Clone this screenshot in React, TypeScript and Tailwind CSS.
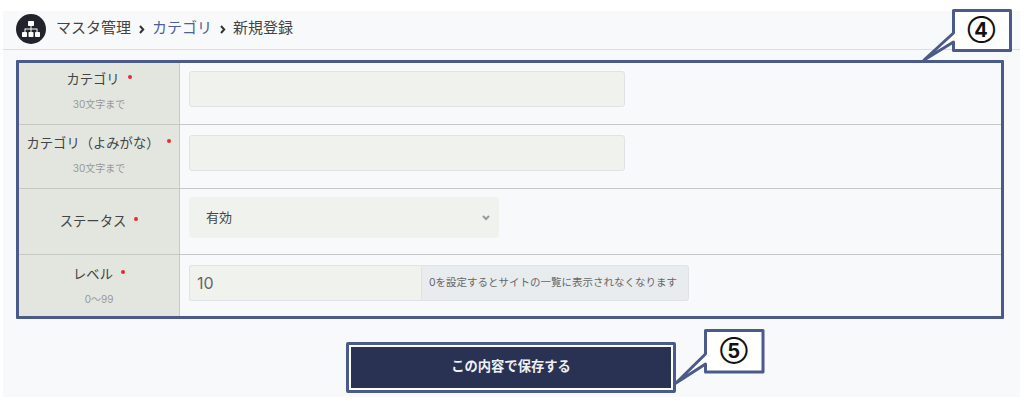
const FONT = "font-['Inter','Noto_Sans_CJK_JP',sans-serif]";

function Required() {
  return <span className="inline-block w-[4px] h-[4px] rounded-full bg-[#f0282d] ml-[8px] relative top-[-5px]" />;
}

function Chevron() {
  return (
    <svg className="mx-[7.5px] mt-[1px]" width="6" height="9" viewBox="0 0 6 9" fill="none" stroke="#333" strokeWidth="2">
      <path d="M1 1l3.2 3.5L1 8" />
    </svg>
  );
}

function Row({
  title,
  note,
  rowClass,
  labelClass,
  fieldClass,
  children,
}: {
  title: string;
  note?: string;
  rowClass: string;
  labelClass: string;
  fieldClass: string;
  children: React.ReactNode;
}) {
  return (
    <div className={`flex ${rowClass}`}>
      <div className={`w-[161px] shrink-0 bg-[#e2e6df] border-r border-[#c8cac6] flex flex-col items-center justify-center ${labelClass}`}>
        <div className="text-[13.3px] leading-[18px] text-[#444] whitespace-nowrap">
          {title}
          <Required />
        </div>
        {note && <div className="text-[10px] leading-[12px] text-[#999] mt-[10px]">{note}</div>}
      </div>
      <div className={`flex-1 pl-[9px] ${fieldClass}`}>{children}</div>
    </div>
  );
}

function TextBox() {
  return <div className="w-[436px] h-[36px] bg-[#f0f2ed] border border-[#dfe2e6] rounded-[3px]" />;
}

// callout boxes sit over the page, so these are absolute
function Callouts() {
  return (
    <>
      <svg className="absolute left-0 top-0 pointer-events-none" width="1024" height="407" viewBox="0 0 1024 407">
        <path d="M953.5 10.5H1010.5V50.5H953.5V42L924 60L953.5 33Z" fill="#fff" stroke="#4a5a8a" strokeWidth="3" strokeLinejoin="round" />
        <path d="M705.5 330.5H763V372H705.5V364L676 383L705.5 354Z" fill="#fff" stroke="#4a5a8a" strokeWidth="3" strokeLinejoin="round" />
      </svg>
      <div className="absolute left-[953px] top-[10px] w-[57px] h-[39px] flex items-center justify-center text-[20px] font-bold text-[#111]">④</div>
      <div className="absolute left-[705px] top-[330px] w-[58px] h-[41px] flex items-center justify-center text-[20px] font-bold text-[#111]">⑤</div>
    </>
  );
}

export default function App() {
  return (
    <div className={`relative w-[1024px] h-[407px] bg-white overflow-hidden pt-[11px] pl-[3px] ${FONT}`}>
      <div className="w-[1017px] h-[386px] bg-[#f8f9fb]">
        <div className="h-[39px] flex items-center pl-[13px] pb-[3px] border-b border-[#dcdedc] text-[15px] text-[#444]">
          <span className="w-[30px] h-[30px] rounded-full bg-[#23232b] flex items-center justify-center mr-[10px]">
            <svg width="20" height="18" viewBox="0 0 20 18" fill="#fff">
              <rect x="7" y="1" width="6" height="5" rx="0.8" />
              <rect x="1" y="12" width="5" height="5" rx="0.8" />
              <rect x="7.5" y="12" width="5" height="5" rx="0.8" />
              <rect x="14" y="12" width="5" height="5" rx="0.8" />
              <path d="M9.5 6h1v2.5h6V12h-1V9.5h-5V12h-1V9.5h-5V12h-1V8.5h6Z" />
            </svg>
          </span>
          <span>マスタ管理</span>
          <Chevron />
          <span className="text-[#4d5f94]">カテゴリ</span>
          <Chevron />
          <span>新規登録</span>
        </div>

        <div className="ml-[13px] mt-[10px] w-[988px] h-[259px] border-[3px] border-[#4a5a8a] rounded-[1px]">
          <Row title="カテゴリ" note="30文字まで" rowClass="h-[62px] border-b border-[#c6c8c6]" labelClass="pb-[7px]" fieldClass="pt-[8px]">
            <TextBox />
          </Row>
          <Row title="カテゴリ（よみがな）" note="30文字まで" rowClass="h-[64px] border-b border-[#c6c8c6]" labelClass="pb-[5px]" fieldClass="pt-[10px]">
            <TextBox />
          </Row>
          <Row title="ステータス" rowClass="h-[66px] border-b border-[#c6c8c6]" labelClass="pb-[2px]" fieldClass="pt-[8px]">
            <div className="w-[310px] h-[41px] bg-[#f0f2ed] rounded-[4px] flex items-center justify-between pl-[17px] pr-[9px] text-[13px] text-[#444]">
              <span>有効</span>
              <svg width="8" height="6" viewBox="0 0 8 6" fill="none" stroke="#999" strokeWidth="2">
                <path d="M1 1l3 3 3-3" />
              </svg>
            </div>
          </Row>
          <Row title="レベル" note="0〜99" rowClass="h-[61px]" labelClass="pb-[2px]" fieldClass="pt-[10px]">
            <div className="flex h-[36px]">
              <div className="w-[232px] bg-[#f0f2ed] border border-r-0 border-[#dfe2e6] rounded-l-[3px] flex items-center pl-[7px] text-[16px] text-[#666]">10</div>
              <div className="w-[268px] bg-[#e9ecef] border border-[#dfe2e6] rounded-r-[3px] flex items-center pl-[7px] text-[10.5px] text-[#666] whitespace-nowrap">
                0を設定するとサイトの一覧に表示されなくなります
              </div>
            </div>
          </Row>
        </div>

        <div className="flex justify-center mt-[23px] pr-[1px]">
          <button className="w-[330px] h-[51px] border-[3px] border-[#4a5a8a] rounded-[2px] bg-white p-[2px]">
            <span className="flex items-center justify-center w-full h-full pb-[1px] bg-[#2a3254] text-[#eef0f4] text-[13.3px] font-semibold">この内容で保存する</span>
          </button>
        </div>
      </div>
      <Callouts />
    </div>
  );
}
